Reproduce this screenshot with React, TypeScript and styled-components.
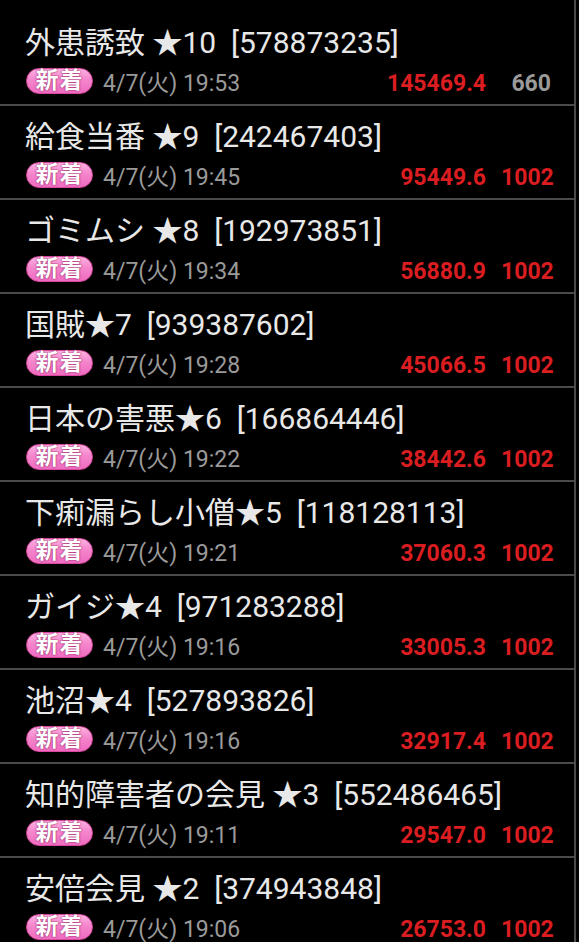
import React from 'react';
import styled, { createGlobalStyle } from 'styled-components';

const GlobalStyle = createGlobalStyle`
	html, body {
		margin: 0;
		padding: 0;
		background: #000;
	}
	body {
		font-family: Roboto, "Noto Sans CJK JP", sans-serif;
	}
`;

const Page = styled.div`
	width: 579px;
	height: 942px;
	overflow: hidden;
	background: #000;
`;

const List = styled.ul`
	list-style: none;
	margin: 0;
	padding: 12px 0 0;
	width: 574px;
	min-height: 930px;
	border-right: 2px solid #4a4a4a;
`;

const Row = styled.li`
	display: flex;
	flex-direction: column;
	gap: 6px;
	height: 94px;
	box-sizing: border-box;
	padding: 13px 23px 0 25px;
	border-bottom: 2px solid #4a4a4a;
`;

const Title = styled.div`
	height: 36px;
	line-height: 36px;
	font-size: 30px;
	color: #e8e8e8;
	white-space: pre;
`;

const Meta = styled.div`
	display: flex;
	align-items: flex-end;
	height: 30px;
	line-height: 26px;
`;

const Badge = styled.span`
	align-self: flex-start;
	margin: 1px 0 0 1px;
	display: inline-flex;
	align-items: center;
	justify-content: center;
	width: 67px;
	height: 26px;
	box-sizing: border-box;
	border-radius: 13px;
	border: 1px solid #d8479e;
	background: linear-gradient(#fbb2e2, #f585cc 45%, #ee6cc0);
	color: #fff;
	font-size: 23px;
	font-weight: 700;
	line-height: 26px;
	letter-spacing: 1px;
	text-shadow: 0 0 2px #9e2469, 0 0 1px #9e2469;
`;

const Date = styled.span`
	margin-left: 10px;
	font-size: 23px;
	color: #9a9a9a;
`;

const Value = styled.span`
	margin-left: auto;
	font-size: 23px;
	font-weight: 700;
	color: #d91d20;
`;

const Count = styled.span<{ $hot: boolean }>`
	width: 50px;
	margin-left: 15px;
	text-align: right;
	font-size: 23px;
	font-weight: 700;
	color: ${(p) => (p.$hot ? '#d91d20' : '#9a9a9a')};
`;

type Item = { title: string; time: string; value: string; count: number };

const items: Item[] = [
	{ title: '外患誘致 ★10  [578873235]', time: '19:53', value: '145469.4', count: 660 },
	{ title: '給食当番 ★9  [242467403]', time: '19:45', value: '95449.6', count: 1002 },
	{ title: 'ゴミムシ ★8  [192973851]', time: '19:34', value: '56880.9', count: 1002 },
	{ title: '国賊★7  [939387602]', time: '19:28', value: '45066.5', count: 1002 },
	{ title: '日本の害悪★6  [166864446]', time: '19:22', value: '38442.6', count: 1002 },
	{ title: '下痢漏らし小僧★5  [118128113]', time: '19:21', value: '37060.3', count: 1002 },
	{ title: 'ガイジ★4  [971283288]', time: '19:16', value: '33005.3', count: 1002 },
	{ title: '池沼★4  [527893826]', time: '19:16', value: '32917.4', count: 1002 },
	{ title: '知的障害者の会見 ★3  [552486465]', time: '19:11', value: '29547.0', count: 1002 },
	{ title: '安倍会見 ★2  [374943848]', time: '19:06', value: '26753.0', count: 1002 },
];

const App = () => {
	return (
		<Page>
			<GlobalStyle />
			<List>
				{items.map((item) => (
					<Row key={item.title}>
						<Title>{item.title}</Title>
						<Meta>
							<Badge>新着</Badge>
							<Date>4/7(火) {item.time}</Date>
							<Value>{item.value}</Value>
							<Count $hot={item.count >= 1000}>{item.count}</Count>
						</Meta>
					</Row>
				))}
			</List>
		</Page>
	);
};

export default App;
